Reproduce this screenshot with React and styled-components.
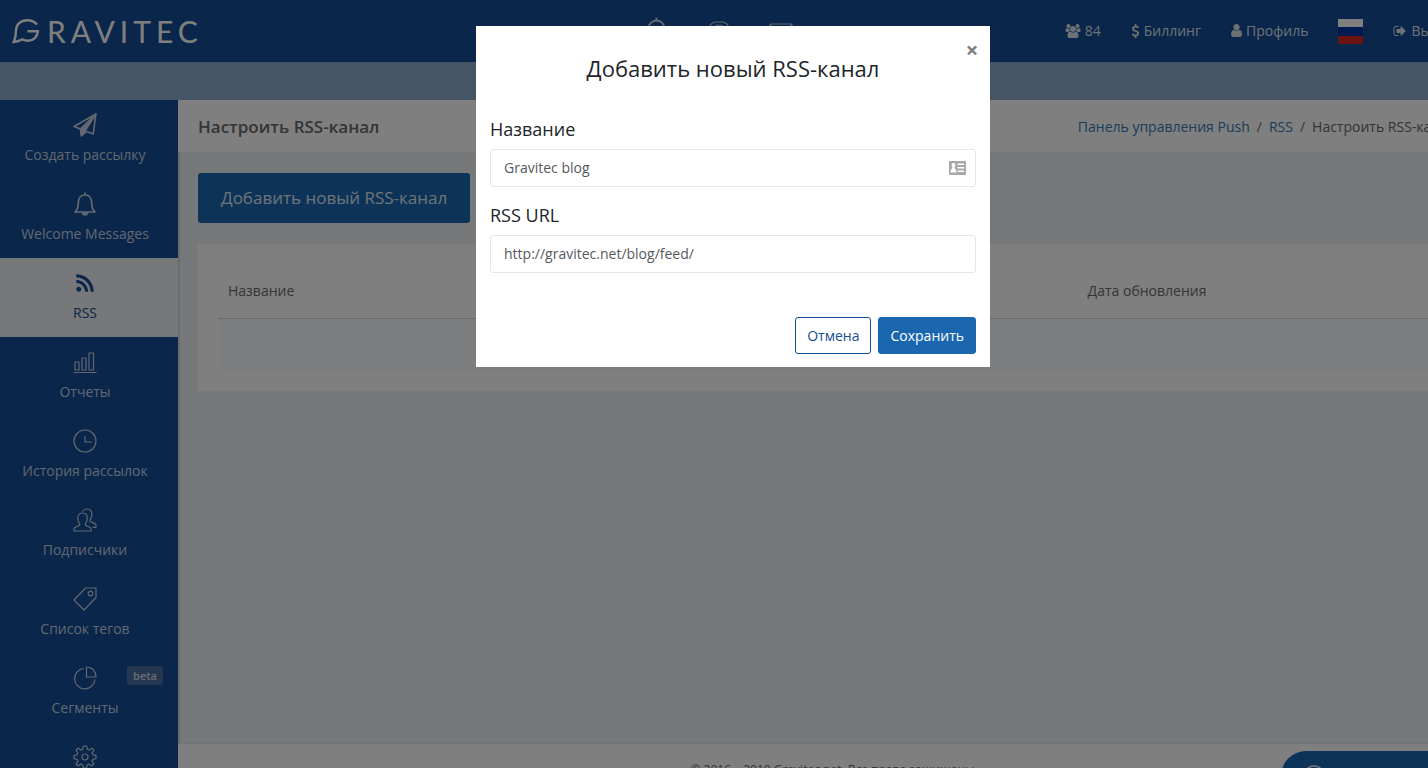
import React, { Component } from 'react';
import styled, { createGlobalStyle } from 'styled-components';
import { FaRss } from 'react-icons/fa';

const GlobalStyle = createGlobalStyle`
  * {
    box-sizing: border-box;
  }
  html,
  body {
    margin: 0;
    overflow: hidden;
    background: #eef0f4;
  }
  body,
  input,
  button {
    font-family: 'Open Sans', 'Noto Sans', sans-serif;
    font-size: 14px;
    line-height: 20px;
  }
`;

/* the page runs a little past the right edge of the window */
const Page = styled.div`
  display: flex;
  flex-direction: column;
  width: calc(100% + 38px);
  height: calc(100vh + 26px);
`;

const Header = styled.header`
  display: grid;
  grid-template-columns: 1fr auto 1fr;
  align-items: center;
  flex: none;
  height: 62px;
  padding: 0 11px 0 12px;
  background: #144d94;
`;

const Logo = styled.a`
  display: flex;
  align-items: center;
  gap: 7px;
  color: #ffffff;
  font-family: Lato, sans-serif;
  font-size: 30px;
  line-height: 36px;
  letter-spacing: 5px;
  text-decoration: none;
`;

const Channels = styled.nav`
  display: flex;
  align-items: center;
  gap: 38px;
  padding-right: 30px;
`;

const ChannelLink = styled.a`
  display: flex;
  justify-content: center;
  width: 24px;
  color: #c3d0e2;

  svg {
    flex: none;
  }
`;

const UserNav = styled.nav`
  display: flex;
  align-items: center;
  justify-content: flex-end;
  gap: 30px;
`;

const UserLink = styled.a`
  display: flex;
  align-items: center;
  gap: 4px;
  color: #dde4ee;
  text-decoration: none;
`;

const Flag = styled.button`
  width: 25px;
  height: 25px;
  padding: 0;
  border: 0;
  background: linear-gradient(#fff 0 8px, #0033a0 8px 17px, #d52b1e 17px);
`;

const Band = styled.div`
  flex: none;
  height: 38px;
  background: #8aaacb;
`;

const Body = styled.div`
  display: flex;
  flex: 1;
  min-height: 0;
`;

const Sidebar = styled.nav`
  flex: none;
  width: 178px;
  overflow: hidden;
  background: #144d94;
  box-shadow: 1px 1px 2px rgba(0, 0, 0, 0.2);
`;

const SideLink = styled.a`
  position: relative;
  display: flex;
  flex-direction: column;
  align-items: center;
  gap: 8px;
  height: 79px;
  padding: 13px 8px 0 0;
  color: ${props => (props.$active ? '#144d94' : '#c3d0e2')};
  background: ${props => (props.$active ? '#eef0f4' : 'transparent')};
  text-decoration: none;
`;

const Beta = styled.span`
  position: absolute;
  top: 13px;
  right: 15px;
  padding: 0 6px;
  border-radius: 3px;
  color: #cfd8e6;
  background: #4d6fa3;
  font-size: 11px;
  font-weight: 600;
  line-height: 19px;
`;

const Content = styled.div`
  display: flex;
  flex: 1;
  flex-direction: column;
  min-width: 0;
`;

const TitleBar = styled.div`
  display: flex;
  align-items: center;
  justify-content: space-between;
  flex: none;
  height: 52px;
  padding: 2px 10px 0 20px;
  background: #ffffff;
`;

const PageTitle = styled.h1`
  margin: 0;
  color: #676a6c;
  font-size: 17px;
  font-weight: 600;
  line-height: 24px;
`;

const Crumbs = styled.nav`
  display: flex;
  gap: 7px;
  color: #676a6c;

  a {
    color: #337ab7;
    text-decoration: none;
  }
`;

const Main = styled.main`
  flex: 1;
  padding: 21px 20px;
`;

const AddButton = styled.button`
  height: 50px;
  padding: 0 23px;
  border: 0;
  border-radius: 3px;
  color: #dde7f1;
  background: #1a67b0;
  font-size: 17px;
`;

const Card = styled.section`
  margin-top: 21px;
  padding: 21px 0 20px 20px;
  background: #ffffff;
`;

const Table = styled.table`
  width: 100%;
  border-collapse: collapse;
  table-layout: fixed;

  th {
    height: 53px;
    padding: 0 10px;
    border-bottom: 1px solid #d4d6da;
    color: #676a6c;
    font-weight: 400;
    text-align: left;
  }
  th:first-child {
    width: 70%;
  }
  td {
    height: 53px;
    background: #f9fafc;
  }
`;

const Footer = styled.footer`
  flex: none;
  height: 51px;
  padding: 18px 0 0 24px;
  border-top: 1px solid #e4e6ea;
  color: #676a6c;
  background: #ffffff;
  font-size: 12px;
  line-height: 16px;
  text-align: center;
`;

const Chat = styled.button`
  position: fixed;
  right: -38px;
  bottom: -33px;
  display: flex;
  width: 185px;
  height: 50px;
  padding: 13px 22px;
  border: 0;
  border-radius: 25px;
  color: #dde7f1;
  background: #1a67b0;
`;

const Backdrop = styled.div`
  position: fixed;
  top: 0;
  right: -38px;
  bottom: 0;
  left: 0;
  display: flex;
  align-items: flex-start;
  justify-content: center;
  padding-top: 26px;
  background: rgba(0, 0, 0, 0.5);
`;

const Dialog = styled.form`
  position: relative;
  width: 514px;
  padding: 26px 14px 13px;
  background: #ffffff;
`;

const Close = styled.button`
  position: absolute;
  top: 12px;
  right: 10px;
  width: 16px;
  height: 22px;
  padding: 0;
  border: 0;
  color: #7f7f7f;
  background: none;
  font-size: 22px;
  font-weight: 700;
`;

const DialogTitle = styled.h2`
  margin: 0 0 33px;
  color: #212529;
  font-size: 22px;
  font-weight: 400;
  line-height: 32px;
  text-align: center;
`;

const Label = styled.label`
  display: block;
  color: #212529;
  font-size: 18px;
  line-height: 24px;
`;

const Field = styled.div`
  display: flex;
  align-items: center;
  height: 38px;
  margin: 8px 0 16px;
  padding: 0 9px 0 13px;
  border: 1px solid #e5e6e7;
  border-radius: 3px;
`;

const Input = styled.input`
  flex: 1;
  min-width: 0;
  padding: 0;
  border: 0;
  outline: 0;
  color: #55595c;
  background: none;
`;

const Actions = styled.div`
  display: flex;
  justify-content: flex-end;
  gap: 7px;
  margin-top: 44px;
`;

const Button = styled.button`
  height: 37px;
  padding: 0 11px;
  border: 1px solid ${props => (props.$primary ? '#1a67b0' : '#144d94')};
  border-radius: 3px;
  color: ${props => (props.$primary ? '#ffffff' : '#144d94')};
  background: ${props => (props.$primary ? '#1a67b0' : '#ffffff')};
`;

const Line = ({ children, size = 24, width = 1.2 }) => (
  <svg
    width={size}
    height={size}
    viewBox="0 0 24 24"
    fill="none"
    stroke="currentColor"
    strokeWidth={width}
    strokeLinejoin="round"
    aria-hidden="true"
  >
    {children}
  </svg>
);

const Solid = ({ d, width = 14, box = '0 0 1792 1792' }) => (
  <svg width={width} height="14" viewBox={box} fill="currentColor" aria-hidden="true">
    <path d={d} />
  </svg>
);

const BellIcon = ({ size }) => (
  <Line size={size} width={1.7}>
    <path d="M2 20c2.800-2.500 3.300-5 3.300-9.500C5.300 6 8 3 12 3s6.700 3 6.700 7.500c0 4.500.5 7 3.300 9.500zM12 3V.6" />
    <path d="M9.500 21c.3 1.300 1.200 2 2.500 2s2.200-.7 2.500-2z" fill="currentColor" />
  </Line>
);

const usersPath =
  'M529 896q-162 5-265 128h-134q-82 0-138-40.500t-56-118.500q0-353 124-353 6 0 43.500 21t97.500 42.500 119 21.500q67 0 133-23-5 37-5 66 0 139 81 256zm1071 637q0 120-73 189.500t-194 69.500h-874q-121 0-194-69.500t-73-189.500q0-53 3.500-103.500t14-109 26.500-108.500 43-97.500 62-81 85.500-53.500 111.500-20q10 0 43 21.500t73 48 107 48 135 21.500 135-21.500 107-48 73-48 43-21.500q61 0 111.500 20t85.500 53.500 62 81 43 97.500 26.500 108.500 14 109 3.500 103.500zm-1024-1277q0 106-75 181t-181 75-181-75-75-181 75-181 181-75 181 75 75 181zm704 384q0 159-112.500 271.500t-271.500 112.500-271.500-112.500-112.500-271.500 112.500-271.500 271.500-112.500 271.500 112.500 112.500 271.500zm576 225q0 78-56 118.500t-138 40.500h-134q-103-123-265-128 81-117 81-256 0-29-5-66 66 23 133 23 59 0 119-21.500t97.500-42.500 43.500-21q124 0 124 353zm-128-609q0 106-75 181t-181 75-181-75-75-181 75-181 181-75 181 75 75 181z';
const dollarPath =
  'M1362 1185q0 153-99.500 263.500t-258.500 136.500v175q0 14-9 23t-23 9h-135q-13 0-22.500-9.500t-9.500-22.500v-175q-66-9-127.500-31t-101.500-44.500-74-48-46.500-37.500-17.500-18q-17-21-2-41l103-135q7-10 23-12 15-2 24 9l2 2q113 99 243 125 37 8 74 8 81 0 142.500-43t61.500-122q0-28-15-53t-33.500-42-58.500-37.500-66-32-80-32.500q-39-16-61.500-25t-61.500-26.500-62.500-31-56.500-35.500-53.500-42.500-43.500-49-35.500-58-21-66.500-8.500-78q0-138 98-242t255-134v-180q0-13 9.500-22.500t22.500-9.500h135q14 0 23 9t9 23v176q57 6 110.500 23t87 33.500 63.500 37.500 39 29 15 14q17 18 5 38l-81 146q-8 15-23 16-14 3-27-7-3-3-14.500-12t-39-26.500-58.500-32-74.500-26-85.500-11.500q-95 0-155 43t-60 111q0 26 8.500 48t29.500 41.500 39.500 33 56 31 60.500 27 70 27.500q53 20 81 31.500t76 35 75.500 42.500 62 50 53 63.500 31.500 76.500 13 94z';
const userPath =
  'M1280 1271q0 109-62.500 187t-150.500 78h-854q-88 0-150.500-78t-62.500-187q0-85 8.500-160.500t31.500-152 58.500-131 94-89 134.500-34.500q131 128 313 128t313-128q76 0 134.500 34.500t94 89 58.500 131 31.500 152 8.500 160.500zm-256-887q0 159-112.500 271.500t-271.500 112.500-271.500-112.500-112.500-271.500 112.500-271.500 271.500-112.500 271.500 112.500 112.500 271.500z';
const signOutPath =
  'M704 1440q0 4 1 20t.5 26.500-3 23.500-10 19.500-20.500 6.500h-320q-119 0-203.500-84.500t-84.500-203.500v-704q0-119 84.500-203.500t203.500-84.500h320q13 0 22.500 9.500t9.500 22.500q0 4 1 20t.5 26.500-3 23.500-10 19.500-20.500 6.500h-320q-66 0-113 47t-47 113v704q0 66 47 113t113 47h312l11.500 1 11.500 3 8 5.500 7 9 2 13.500zm928-544q0 26-19 45l-544 544q-19 19-45 19t-45-19-19-45v-288h-448q-26 0-45-19t-19-45v-384q0-26 19-45t45-19h448v-288q0-26 19-45t45-19 45 19l544 544q19 19 19 45z';

const items = [
  {
    name: 'Создать рассылку',
    icon: (
      <Line width={1.6}>
        <path d="M1 13.500L22.800 1 20.300 21l-6.800-2.500-5 4.300-1-6.800z" />
        <path d="M22.800 1L7.500 16l1 6.800 3.800-5.300z" fill="currentColor" />
      </Line>
    )
  },
  { name: 'Welcome Messages', icon: <BellIcon /> },
  { name: 'RSS', icon: <FaRss size={20} style={{ margin: 2 }} />, active: true },
  {
    name: 'Отчеты',
    icon: (
      <Line>
        <path d="M.5 22.500h23M2 20v-8h4v8zM9 20V8h4v12zM16 20V3h4.500v17z" />
      </Line>
    )
  },
  {
    name: 'История рассылок',
    icon: (
      <Line>
        <circle cx="12" cy="12" r="11" />
        <path d="M12 7v6h7" />
      </Line>
    )
  },
  {
    name: 'Подписчики',
    icon: (
      <Line>
        <path d="M1 23v-2.500c.3-1.700 5.300-2.200 5.800-3.800.2-1.300-1.800-2.300-2-6C4.500 7 6.500 5 9.500 5s5 2 4.700 5.700c-.2 3.700-2.200 4.700-2 6 .5 1.600 5.500 2.100 5.800 3.800V23z" />
        <path d="M9.500 3.500C10.500 1.800 12 1 14 1c3.400 0 5.200 2.300 4.900 5.800-.2 3.600-2.200 4.700-2 6 .4 1.600 5.700 2.200 6.100 4v2.500h-3.500" />
      </Line>
    )
  },
  {
    name: 'Список тегов',
    icon: (
      <Line>
        <path d="M12.500 1H23v9.500L11 23 1 13z" />
        <circle cx="17.500" cy="6.500" r="2.300" />
      </Line>
    )
  },
  {
    name: 'Сегменты',
    beta: true,
    icon: (
      <Line>
        <path d="M11 2.500A10.200 10.200 0 1 0 22 13.500" />
        <path d="M13.500 1v10H23C23 5 19 1 13.500 1z" />
      </Line>
    )
  },
  {
    name: 'Настройки',
    icon: (
      <Line>
        <path d="M10.300 1h3.400l.6 3.200 2 .9L19 3.200 21 5.200l-2 2.600.9 2 3.100.6v3.300l-3.100.6-.9 2 1.900 2.600-2.200 2.100-2.500-1.900-2 .9-.5 3H10.300l-.6-3-2-.9L5.100 21 3 18.900l1.900-2.600-.9-2-3-.6v-3.300l3-.6.9-2L3 5.200l2.100-2.100L7.700 5.100l2-.9z" />
        <circle cx="12" cy="12" r="3" />
      </Line>
    )
  }
];

class App extends Component {
  state = {
    name: 'Gravitec blog',
    url: 'http://gravitec.net/blog/feed/'
  };

  handleChange = (evt) => {
    this.setState({ [evt.target.name]: evt.target.value });
  };

  render() {
    return (
      <>
        <GlobalStyle />
        <Page>
          <Header>
            <Logo href="#">
              <svg width="28" height="26" viewBox="0 0 28 26" fill="none" stroke="currentColor" strokeWidth="2.400" aria-label="G">
                <path d="M25 6.500C22.500 3.500 19 2.200 15.500 2.200 8.500 2.200 4 6.500 4 12.500c0 4.500-.7 8.200-2.200 11.500 3.500-.2 5.700-1.500 8.500-2.600 1.700.8 3.700 1.300 5.700 1.300 5.500 0 9.500-3.800 9.900-9.500H15.500" />
              </svg>
              RAVITEC
            </Logo>
            <Channels>
              <ChannelLink href="#" aria-label="Push">
                <BellIcon size={29} />
              </ChannelLink>
              <ChannelLink href="#" aria-label="Instagram">
                <Line>
                  <rect x="2" y="3" width="20" height="20" rx="7" />
                  <circle cx="12" cy="13" r="7" />
                </Line>
              </ChannelLink>
              <ChannelLink href="#" aria-label="Email">
                <Line>
                  <rect x="1" y="5" width="22" height="16" rx="1" />
                  <path d="M1 6l11 8 11-8" />
                </Line>
              </ChannelLink>
            </Channels>
            <UserNav>
              <UserLink href="#">
                <Solid d={usersPath} width={16} box="-64 0 1920 1792" />
                84
              </UserLink>
              <UserLink href="#">
                <Solid d={dollarPath} width={9} box="343 0 1106 1792" />
                Биллинг
              </UserLink>
              <UserLink href="#">
                <Solid d={userPath} width={11} box="0 0 1280 1664" />
                Профиль
              </UserLink>
              <Flag aria-label="Русский" />
              <UserLink href="#">
                <Solid d={signOutPath} width={14} />
                Выход
              </UserLink>
            </UserNav>
          </Header>
          <Band />
          <Body>
            <Sidebar>
              {items.map(item => (
                <SideLink href="#" key={item.name} $active={item.active}>
                  {item.icon}
                  {item.name}
                  {item.beta && <Beta>beta</Beta>}
                </SideLink>
              ))}
            </Sidebar>
            <Content>
              <TitleBar>
                <PageTitle>Настроить RSS-канал</PageTitle>
                <Crumbs>
                  <a href="#">Панель управления Push</a>
                  <span>/</span>
                  <a href="#">RSS</a>
                  <span>/</span>
                  <span>Настроить RSS-канал</span>
                </Crumbs>
              </TitleBar>
              <Main>
                <AddButton>Добавить новый RSS-канал</AddButton>
                <Card>
                  <Table>
                    <thead>
                      <tr>
                        <th>Название</th>
                        <th>Дата обновления</th>
                      </tr>
                    </thead>
                    <tbody>
                      <tr>
                        <td colSpan="2" />
                      </tr>
                    </tbody>
                  </Table>
                </Card>
              </Main>
              <Footer>© 2016 – 2019 Gravitec.net. Все права защищены.</Footer>
            </Content>
          </Body>
        </Page>
        <Chat aria-label="Чат">
          <Line size={22} width={2}>
            <circle cx="12" cy="12" r="10" />
          </Line>
        </Chat>
        <Backdrop>
          <Dialog onSubmit={evt => evt.preventDefault()}>
            <Close type="button" aria-label="Закрыть">
              ×
            </Close>
            <DialogTitle>Добавить новый RSS-канал</DialogTitle>
            <Label htmlFor="name">Название</Label>
            <Field>
              <Input id="name" name="name" value={this.state.name} onChange={this.handleChange} />
              <svg width="17" height="14" viewBox="0 0 17 14" fill="#a9a9a9" aria-hidden="true">
                <path
                  fillRule="evenodd"
                  d="M1 0h15a1 1 0 0 1 1 1v12a1 1 0 0 1-1 1H1a1 1 0 0 1-1-1V1a1 1 0 0 1 1-1zM4.500 2C3 2 2.500 3 2.700 4.500c.1 1 .5 1.500.8 2C3 8 1.500 8.500 1.500 11.500h6C7.500 8.500 6 8 5.500 6.500c.3-.5.700-1 .8-2C6.500 3 6 2 4.500 2zM8.500 2.500V4H15V2.500zM8.500 6v1.500H15V6zM8.500 9.500V11H15V9.500z"
                />
              </svg>
            </Field>
            <Label htmlFor="url">RSS URL</Label>
            <Field>
              <Input id="url" name="url" value={this.state.url} onChange={this.handleChange} />
            </Field>
            <Actions>
              <Button type="button">Отмена</Button>
              <Button $primary>Сохранить</Button>
            </Actions>
          </Dialog>
        </Backdrop>
      </>
    );
  }
}

export default App;
